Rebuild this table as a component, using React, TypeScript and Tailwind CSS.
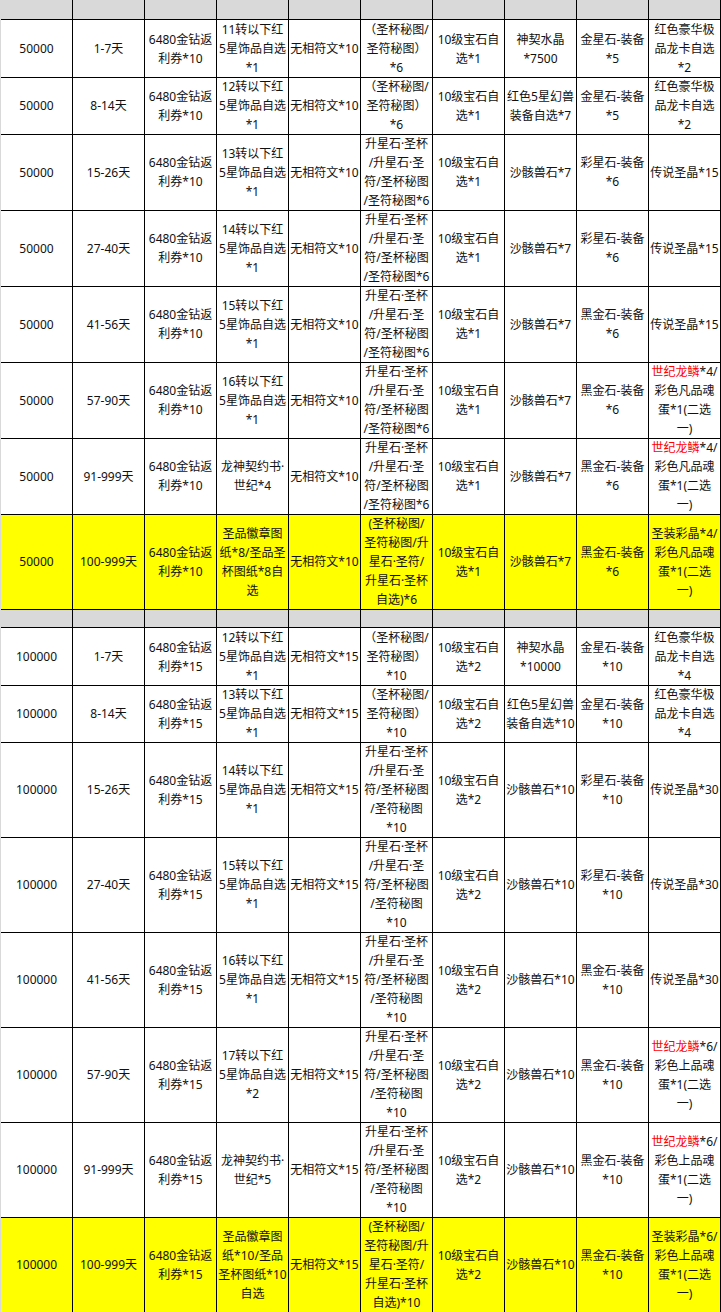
type Row = {
  h: string;
  yellow?: boolean;
  cells: string[][];
};

const coupon = (n: number) => ["6480金钻返", `利券*${n}`];
const gem = (n: number) => ["10级宝石自", `选*${n}`];
const mitu = (n: number) => ["（圣杯秘图/", "圣符秘图）", `*${n}`];
const star = (last: string[]) => ["升星石·圣杯", "/升星石·圣", "符/圣杯秘图", ...last];
const mixed = (n: number) => ["(圣杯秘图/", "圣符秘图/升", "星石·圣符/", "升星石·圣杯", `自选)*${n}`];
const ornament = (lv: number, n: number) => [`${lv}转以下红`, "5星饰品自选", `*${n}`];
const equip = (kind: string, n: number) => [`${kind}-装备`, `*${n}`];
const longka = (n: number) => ["红色豪华极", "品龙卡自选", `*${n}`];
const dragon = (n: number, grade: string) => [`世纪龙鳞*${n}/`, `彩色${grade}品魂`, "蛋*1(二选", "一)"];
const holy = (n: number, grade: string) => [`圣装彩晶*${n}/`, `彩色${grade}品魂`, "蛋*1(二选", "一)"];

const rows50: Row[] = [
  { h: "h-[57px]", cells: [["50000"], ["1-7天"], coupon(10), ornament(11, 1), ["无相符文*10"], mitu(6), gem(1), ["神契水晶", "*7500"], equip("金星石", 5), longka(2)] },
  { h: "h-[57px]", cells: [["50000"], ["8-14天"], coupon(10), ornament(12, 1), ["无相符文*10"], mitu(6), gem(1), ["红色5星幻兽", "装备自选*7"], equip("金星石", 5), longka(2)] },
  { h: "h-[76px]", cells: [["50000"], ["15-26天"], coupon(10), ornament(13, 1), ["无相符文*10"], star(["/圣符秘图*6"]), gem(1), ["沙骸兽石*7"], equip("彩星石", 6), ["传说圣晶*15"]] },
  { h: "h-[76px]", cells: [["50000"], ["27-40天"], coupon(10), ornament(14, 1), ["无相符文*10"], star(["/圣符秘图*6"]), gem(1), ["沙骸兽石*7"], equip("彩星石", 6), ["传说圣晶*15"]] },
  { h: "h-[76px]", cells: [["50000"], ["41-56天"], coupon(10), ornament(15, 1), ["无相符文*10"], star(["/圣符秘图*6"]), gem(1), ["沙骸兽石*7"], equip("黑金石", 6), ["传说圣晶*15"]] },
  { h: "h-[76px]", cells: [["50000"], ["57-90天"], coupon(10), ornament(16, 1), ["无相符文*10"], star(["/圣符秘图*6"]), gem(1), ["沙骸兽石*7"], equip("黑金石", 6), dragon(4, "凡")] },
  { h: "h-[76px]", cells: [["50000"], ["91-999天"], coupon(10), ["龙神契约书·", "世纪*4"], ["无相符文*10"], star(["/圣符秘图*6"]), gem(1), ["沙骸兽石*7"], equip("黑金石", 6), dragon(4, "凡")] },
  { h: "h-[95px]", yellow: true, cells: [["50000"], ["100-999天"], coupon(10), ["圣品徽章图", "纸*8/圣品圣", "杯图纸*8自", "选"], ["无相符文*10"], mixed(6), gem(1), ["沙骸兽石*7"], equip("黑金石", 6), holy(4, "凡")] },
];

const rows100: Row[] = [
  { h: "h-[57px]", cells: [["100000"], ["1-7天"], coupon(15), ornament(12, 1), ["无相符文*15"], mitu(10), gem(2), ["神契水晶", "*10000"], equip("金星石", 10), longka(4)] },
  { h: "h-[57px]", cells: [["100000"], ["8-14天"], coupon(15), ornament(13, 1), ["无相符文*15"], mitu(10), gem(2), ["红色5星幻兽", "装备自选*10"], equip("金星石", 10), longka(4)] },
  { h: "h-[95px]", cells: [["100000"], ["15-26天"], coupon(15), ornament(14, 1), ["无相符文*15"], star(["/圣符秘图", "*10"]), gem(2), ["沙骸兽石*10"], equip("彩星石", 10), ["传说圣晶*30"]] },
  { h: "h-[95px]", cells: [["100000"], ["27-40天"], coupon(15), ornament(15, 1), ["无相符文*15"], star(["/圣符秘图", "*10"]), gem(2), ["沙骸兽石*10"], equip("彩星石", 10), ["传说圣晶*30"]] },
  { h: "h-[95px]", cells: [["100000"], ["41-56天"], coupon(15), ornament(16, 1), ["无相符文*15"], star(["/圣符秘图", "*10"]), gem(2), ["沙骸兽石*10"], equip("黑金石", 10), ["传说圣晶*30"]] },
  { h: "h-[95px]", cells: [["100000"], ["57-90天"], coupon(15), ornament(17, 2), ["无相符文*15"], star(["/圣符秘图", "*10"]), gem(2), ["沙骸兽石*10"], equip("黑金石", 10), dragon(6, "上")] },
  { h: "h-[95px]", cells: [["100000"], ["91-999天"], coupon(15), ["龙神契约书·", "世纪*5"], ["无相符文*15"], star(["/圣符秘图", "*10"]), gem(2), ["沙骸兽石*10"], equip("黑金石", 10), dragon(6, "上")] },
  { h: "h-[95px]", yellow: true, cells: [["100000"], ["100-999天"], coupon(15), ["圣品徽章图", "纸*10/圣品", "圣杯图纸*10", "自选"], ["无相符文*15"], mixed(10), gem(2), ["沙骸兽石*10"], equip("黑金石", 10), holy(6, "上")] },
];

function Line({ text }: { text: string }) {
  if (text.startsWith("世纪龙鳞")) {
    return (
      <div>
        <span className="text-[#ff0000]">世纪龙鳞</span>
        {text.slice(4)}
      </div>
    );
  }
  return <div>{text}</div>;
}

function GrayRow({ h }: { h: string }) {
  return (
    <div className={`grid grid-cols-[repeat(10,72px)] ${h} bg-[#d9d9d9]`}>
      {Array.from({ length: 10 }).map((_, i) => (
        <div key={i} className="border-r border-b border-black" />
      ))}
    </div>
  );
}

function DataRow({ row }: { row: Row }) {
  return (
    <div className={`grid grid-cols-[repeat(10,72px)] ${row.h} ${row.yellow ? "bg-[#ffff00]" : "bg-white"}`}>
      {row.cells.map((lines, i) => (
        <div
          key={i}
          className="flex flex-col items-center justify-center border-r border-b border-black text-center whitespace-nowrap leading-[19px]"
        >
          {lines.map((t, j) => (
            <Line key={j} text={t} />
          ))}
        </div>
      ))}
    </div>
  );
}

export default function App() {
  return (
    <div
      className="w-[721px] bg-white text-[12px] text-[#111] border-l border-[#d9d9d9]"
      style={{ fontFamily: '"Noto Sans", "Noto Sans CJK SC", sans-serif' }}
    >
      <GrayRow h="h-[20px]" />
      {rows50.map((r, i) => (
        <DataRow key={i} row={r} />
      ))}
      <GrayRow h="h-[19px]" />
      {rows100.map((r, i) => (
        <DataRow key={i} row={r} />
      ))}
    </div>
  );
}
